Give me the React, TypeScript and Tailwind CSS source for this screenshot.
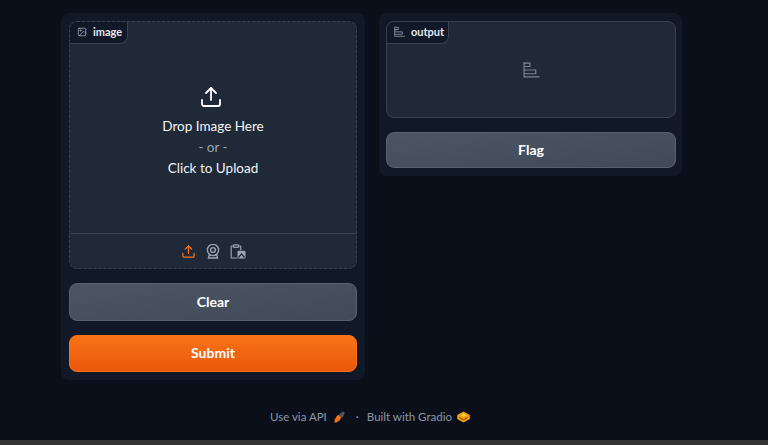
import { Upload } from "lucide-react";

function ImageIcon() {
  return (
    <svg width="10" height="10" viewBox="0 0 24 24" fill="none" stroke="currentColor" strokeWidth="2" strokeLinecap="round" strokeLinejoin="round">
      <rect x="3" y="3" width="18" height="18" rx="2" />
      <circle cx="8.5" cy="8.5" r="1.5" />
      <path d="M21 15l-5-5L5 21" />
    </svg>
  );
}

function BarIcon({ size }: { size: number }) {
  return (
    <svg width={size} height={size} viewBox="0 0 16 16" fill="none" stroke="currentColor" strokeWidth="1.1">
      <path d="M1 1v14h14.5" />
      <path d="M1 2h5.5v3.2H1" />
      <path d="M1 5.2h3v0" />
      <path d="M1 8.5h11v3.5H1" />
    </svg>
  );
}

function Webcam() {
  return (
    <svg width="14" height="15" viewBox="0 0 14 15" fill="none" stroke="currentColor" strokeWidth="1.4" strokeLinecap="round">
      <circle cx="7" cy="6" r="5.6" />
      <circle cx="7" cy="6" r="2.4" />
      <path d="M3.5 10.5 2.5 14h9l-1-3.5" />
    </svg>
  );
}

function ClipboardImage() {
  return (
    <svg width="16" height="15" viewBox="0 0 16 15" fill="none" stroke="currentColor" strokeWidth="1.2" strokeLinejoin="round">
      <path d="M3.5 2H1.2v12h6" />
      <path d="M8.5 2h2.2v4" />
      <rect x="3.5" y="0.8" width="5" height="2.6" rx="0.6" />
      <rect x="7.5" y="6.8" width="8" height="7.7" rx="1" fill="currentColor" stroke="none" />
      <path d="M8.5 13.5l3-3.7 3 3.7" stroke="#1f2937" />
    </svg>
  );
}

function Rocket() {
  return (
    <svg width="11" height="12" viewBox="0 0 11 12">
      <path d="M6 2.5 9 .4 10.8 1.4 9.4 5.4 7.2 7 5 4.5Z" fill="#4b5563" />
      <path d="M4.4 3.8 7.2 6.8 5.6 9.2 3 11.2 .4 11.6.8 8.6 2.5 5.5Z" fill="#f97316" />
    </svg>
  );
}

function GradioLogo() {
  return (
    <svg width="13" height="12" viewBox="0 0 13 12">
      <path d="M6.5 .4 12.8 4v4L6.5 11.6.2 8V4Z" fill="#f59e0b" />
      <path d="M6.5 2.6 9.4 4.2 6.5 5.8 3.6 4.2Z" fill="#fcd34d" />
      <path d="M2.5 6.6 6.5 8.8 10.5 6.6" fill="none" stroke="#7c4a03" strokeWidth="1" />
    </svg>
  );
}

function Label({ icon, text, width }: { icon: React.ReactNode; text: string; width: string }) {
  return (
    <div className={`flex h-[22px] shrink-0 items-center gap-[6px] self-start rounded-br-[8px] border-r border-b border-[#374151] bg-[#111827] pb-[2px] pl-[7px] text-[11px] font-bold leading-none text-[#e5e7eb] ${width}`}>
      <span className="text-[#9ca3af]">{icon}</span>
      {text}
    </div>
  );
}

export default function App() {
  return (
    <div className="flex h-[445px] flex-col overflow-hidden bg-[#0b0f19] font-['Lato',sans-serif]">
      <main className="flex flex-1 items-start gap-[14px] pl-[61px] pt-[13px]">
        <section className="flex w-[304px] flex-col gap-[14px] rounded-[8px] bg-[#111827] p-[8px]">
          <div className="flex h-[248px] flex-col overflow-hidden rounded-[8px] border border-dashed border-[#374151] bg-[#1f2937]">
            <Label icon={<ImageIcon />} text="image" width="w-[58px]" />
            <div className="flex flex-1 flex-col items-center pt-[41px] text-[13.5px] leading-[21px] text-[#f3f4f6]">
              <Upload size={24} strokeWidth={1.8} className="mb-[7px] -translate-x-[2px] text-white" />
              <span>Drop Image Here</span>
              <span className="text-[#9ca3af]">- or -</span>
              <span>Click to Upload</span>
            </div>
            <div className="flex h-[35px] items-center justify-center gap-[10px] border-t border-[#374151] text-[#9ca3af]">
              <Upload size={15} strokeWidth={2} className="text-[#f97316]" />
              <Webcam />
              <ClipboardImage />
            </div>
          </div>
          <button className="h-[38px] rounded-[8px] border border-[#566070] bg-gradient-to-br from-[#4b5563] to-[#414a58] pb-[2px] text-[14px] font-bold text-white">
            Clear
          </button>
          <button className="h-[37px] rounded-[8px] border border-[#f97316] bg-gradient-to-b from-[#f97316] to-[#ea580c] pb-[2px] text-[14px] font-bold text-white">
            Submit
          </button>
        </section>
        <section className="flex w-[303px] flex-col gap-[14px] rounded-[8px] bg-[#111827] py-[8px] pl-[7px] pr-[6px]">
          <div className="flex h-[97px] flex-col overflow-hidden rounded-[8px] border border-[#374151] bg-[#1f2937]">
            <Label icon={<BarIcon size={11} />} text="output" width="w-[62px]" />
            <div className="flex flex-1 justify-center pt-[17px] text-[#7d8590]">
              <BarIcon size={17} />
            </div>
          </div>
          <button className="h-[36px] rounded-[8px] border border-[#566070] bg-gradient-to-br from-[#4b5563] to-[#414a58] pb-[2px] text-[14px] font-bold text-white">
            Flag
          </button>
        </section>
      </main>
      <footer className="flex h-[33px] items-start justify-center gap-[8px] pr-[28px] pt-[1px] text-[11.5px] leading-[18px] text-[#8a97a8]">
        <span className="flex items-center gap-[7px]">Use via API <Rocket /></span>
        <span className="ml-[3px]">·</span>
        <span className="flex items-center gap-[5px]">Built with Gradio <GradioLogo /></span>
      </footer>
      <div className="h-[5px] bg-[#333333]" />
    </div>
  );
}
